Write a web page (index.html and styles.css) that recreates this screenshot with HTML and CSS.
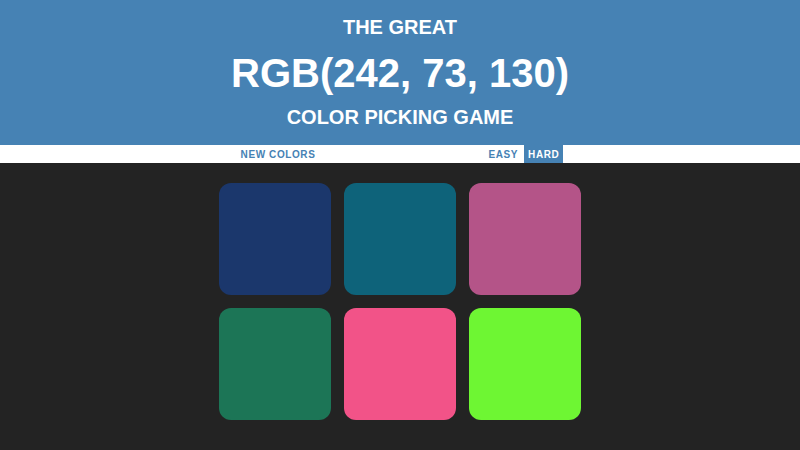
FILE: index.html
```html
<!DOCTYPE html>
<html lang="en">
<head>
  <meta charset="UTF-8">
  <meta name="viewport" content="width=device-width, initial-scale=1.0">
  <title>Color Game</title>
  <link rel="stylesheet" href="styles.css">
</head>
<body>
  <h1>
    <span class="small">The Great</span>
    <span id="colorDisplay">RGB(242, 73, 130)</span>
    <span class="small">Color Picking Game</span>
  </h1>

  <div id="stripe">
    <button id="reset">New Colors</button>
    <span id="message"></span>
    <button class="mode">Easy</button>
    <button class="mode selected">Hard</button>
  </div>

  <div id="container">
    <div class="square" style="background: rgb(27, 55, 108);"></div>
    <div class="square" style="background: rgb(14, 99, 122);"></div>
    <div class="square" style="background: rgb(180, 84, 136);"></div>
    <div class="square" style="background: rgb(28, 117, 86);"></div>
    <div class="square" style="background: rgb(242, 83, 136);"></div>
    <div class="square" style="background: rgb(110, 246, 51);"></div>
  </div>
</body>
</html>
```

FILE: styles.css
```css
* {
  box-sizing: border-box;
  margin: 0;
  padding: 0;
}

body {
  background: #232323;
  font-family: "Liberation Sans", Arial, sans-serif;
}

h1 {
  background: steelblue;
  color: white;
  text-align: center;
  text-transform: uppercase;
  font-weight: bold;
  height: 145px;
  padding-top: 16px;
  line-height: 1.1;
}

h1 span {
  display: block;
}

h1 .small {
  font-size: 20px;
}

#colorDisplay {
  font-size: 40px;
  margin: 13px 0 11px;
}

#stripe {
  background: white;
  height: 18px;
  display: flex;
  justify-content: center;
  align-items: stretch;
}

button {
  border: none;
  background: none;
  text-transform: uppercase;
  height: 100%;
  font-weight: 700;
  color: steelblue;
  letter-spacing: 0.6px;
  font-size: 10px;
  font-family: "Liberation Sans", Arial, sans-serif;
  padding: 0 4px;
  outline: none;
}

button.selected {
  background: steelblue;
  color: white;
}

#message {
  display: inline-block;
  width: 165px;
}

.mode + .mode {
  margin-left: 2px;
}

#container {
  width: 362px;
  margin: 20px auto 0;
  display: grid;
  grid-template-columns: repeat(3, 112px);
  grid-auto-rows: 112px;
  gap: 13px;
}

.square {
  border-radius: 12px;
}
```
